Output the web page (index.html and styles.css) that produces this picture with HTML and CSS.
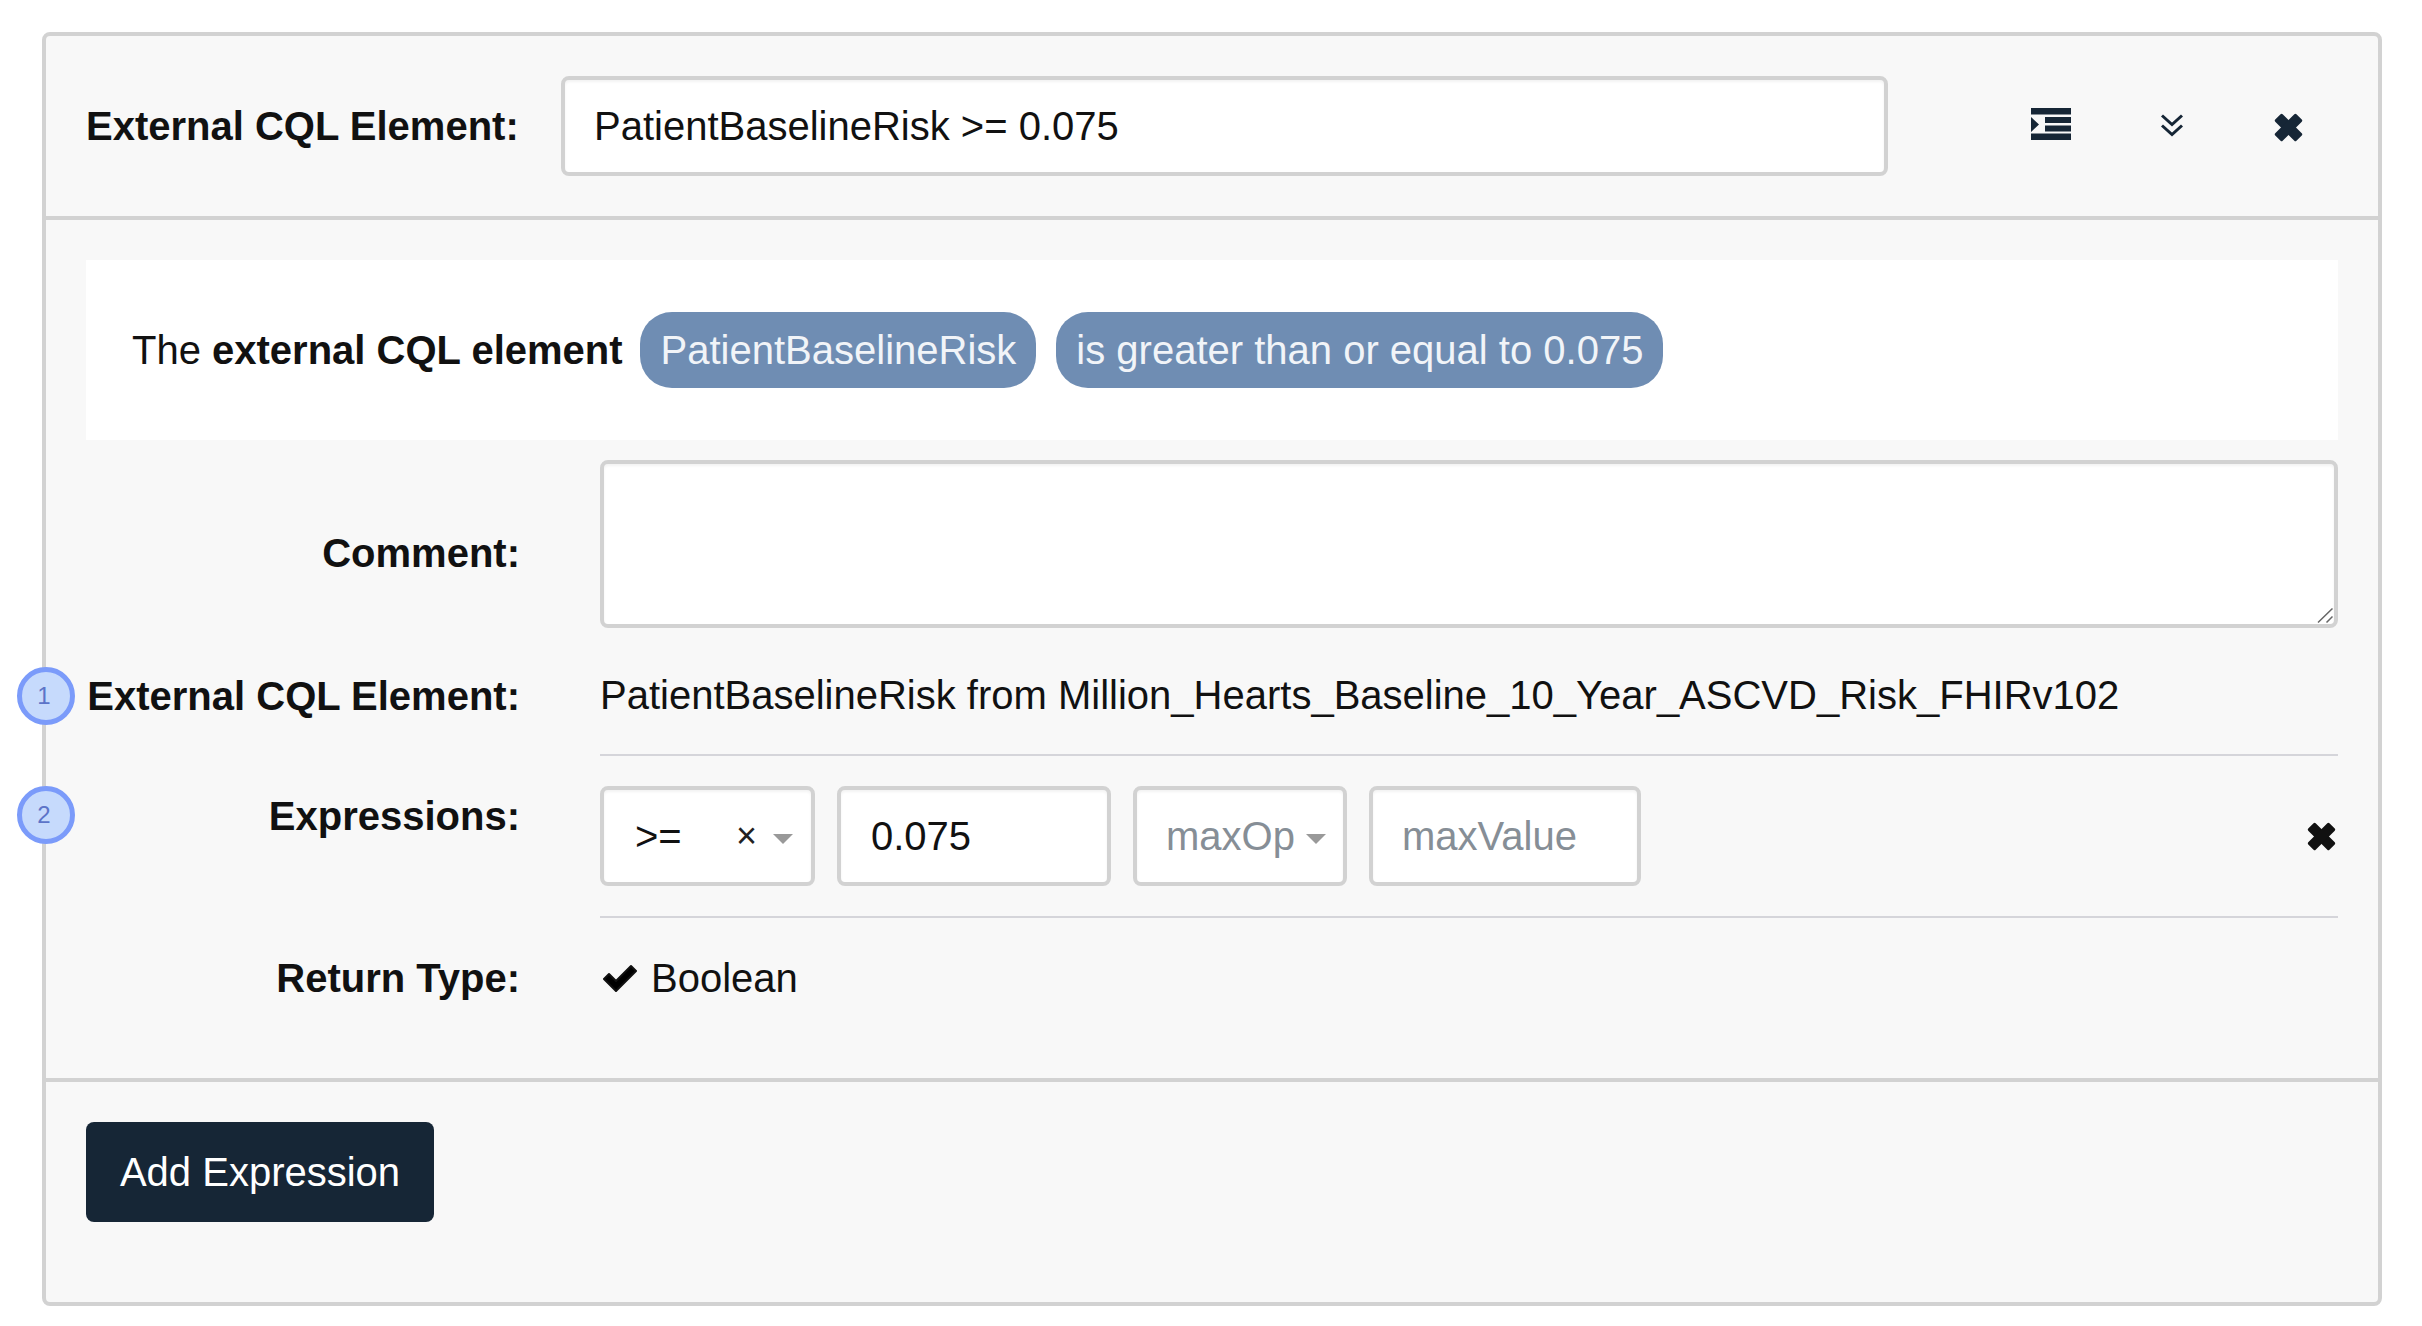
FILE: index.html
```html
<!DOCTYPE html>
<html lang="en">
<head>
<meta charset="utf-8">
<title>External CQL Element</title>
<link rel="stylesheet" href="styles.css">
</head>
<body>
<div class="card">
  <header class="card-header">
    <label class="header-label">External CQL Element:</label>
    <input class="control header-input" type="text" value="PatientBaselineRisk &gt;= 0.075">
    <div class="actions">
      <svg class="icon icon-indent" viewBox="0 0 40 32" width="40" height="32"><path d="M0 0h40v6.500H0zM14 9h26v6H14zM14 17.500h26v6H14zM0 25.500h40V32H0zM0 9l8 7.500L0 24z"/></svg>
      <svg class="icon icon-chevrons" viewBox="0 0 22 22" width="22" height="22"><path d="M1 1.500l10 9 10-9M1 11.500l10 9 10-9" fill="none" stroke="#162636" stroke-width="3"/></svg>
      <svg class="icon icon-close" viewBox="0 0 27 27" width="27" height="27"><g transform="rotate(45 13.500 13.500)"><rect x="-1.500" y="8.250" width="30" height="10.500" rx="1.500"/><rect x="8.250" y="-1.500" width="10.500" height="30" rx="1.500"/></g></svg>
    </div>
  </header>
  <section class="card-body">
    <div class="phrase">
      <span class="phrase-text">The <strong>external CQL element</strong></span>
      <span class="pill">PatientBaselineRisk</span>
      <span class="pill">is greater than or equal to 0.075</span>
    </div>
    <div class="field field-comment">
      <div class="field-label">Comment:</div>
      <div class="comment-wrap">
        <textarea class="control comment"></textarea>
        <svg class="grip" viewBox="0 0 16 15" width="16" height="15"><path d="M1 14.500L15.500 .5M9.500 14.500l6-6" fill="none" stroke="#666" stroke-width="1.500"/></svg>
      </div>
    </div>
    <div class="field field-element">
      <div class="field-label"><span class="step step-one">1</span>External CQL Element:</div>
      <div class="field-value ruled">PatientBaselineRisk from Million_Hearts_Baseline_10_Year_ASCVD_Risk_FHIRv102</div>
    </div>
    <div class="field field-expressions">
      <div class="field-label"><span class="step step-two">2</span>Expressions:</div>
      <div class="expressions ruled">
        <div class="control select select-op"><span class="select-value">&gt;=</span><span class="clear">×</span><span class="caret"></span></div>
        <input class="control value-input" type="text" value="0.075">
        <div class="control select select-max"><span class="placeholder">maxOp</span><span class="caret"></span></div>
        <input class="control value-input value-max" type="text" placeholder="maxValue">
        <svg class="icon icon-remove" viewBox="0 0 27 27" width="27" height="27"><g transform="rotate(45 13.500 13.500)"><rect x="-1.500" y="8.250" width="30" height="10.500" rx="1.500"/><rect x="8.250" y="-1.500" width="10.500" height="30" rx="1.500"/></g></svg>
      </div>
    </div>
    <div class="field field-return">
      <div class="field-label">Return Type:</div>
      <div class="field-value return-value">
        <svg class="icon-check" viewBox="0 0 36 28" width="36" height="28"><path d="M2 15l5-5 7 7L29 2l5 5-20 20z" stroke="#111" stroke-width="2" stroke-linejoin="round"/></svg>
        <span>Boolean</span>
      </div>
    </div>
  </section>
  <footer class="card-footer">
    <button class="add-button" type="button">Add Expression</button>
  </footer>
</div>
</body>
</html>
```
FILE: styles.css
```css
* { box-sizing: border-box; }
html, body { margin: 0; padding: 0; background: #fff; }
body {
  padding: 32px 40px 20px 42px;
  font-family: "Liberation Sans", Arial, Helvetica, sans-serif;
  font-size: 40px;
  line-height: 46px;
  color: #111;
}
.card {
  width: 2340px;
  height: 1274px;
  display: flex;
  flex-direction: column;
  background: #f8f8f8;
  border: 4px solid #d2d2d2;
  border-radius: 8px;
}
.card-header {
  display: flex;
  align-items: center;
  height: 184px;
  padding: 40px;
  border-bottom: 4px solid #d2d2d2;
}
.header-label { width: 475px; flex: none; font-weight: 700; }
.control {
  border: 4px solid #d2d2d2;
  border-radius: 8px;
  background: #fff;
  box-shadow: inset 0 2px 3px rgba(0, 0, 0, .05);
  font: inherit;
  color: #111;
  outline: none;
}
.header-input { width: 1327px; flex: none; height: 100px; padding: 0 29px; }
.actions { display: flex; align-items: center; margin-left: 143px; }
.icon { display: block; fill: #162636; flex: none; overflow: visible; }
.icon-indent { margin-top: -4px; }
.icon-chevrons { margin-left: 90px; margin-top: -2px; }
.icon-close { margin-left: 92px; margin-top: 2px; }
.card-body { flex: 1; padding: 40px 40px 0; border-bottom: 4px solid #d2d2d2; }
.phrase {
  display: flex;
  align-items: center;
  height: 180px;
  padding-left: 46px;
  background: #fff;
  margin-bottom: 20px;
}
.phrase-text { margin-right: 17px; }
.pill {
  display: flex;
  align-items: center;
  height: 76px;
  padding: 0 20px 0 21px;
  margin-right: 20px;
  border-radius: 32px;
  background: #6f8db3;
  color: #f1f4f8;
}
.pill + .pill { padding: 0 20px; }
.field {
  display: grid;
  grid-template-columns: 434px 1fr;
  column-gap: 80px;
}
.field-label { position: relative; text-align: right; font-weight: 700; }
.field-comment { height: 168px; }
.field-comment .field-label { padding-top: 70px; }
.comment-wrap { position: relative; }
.comment { width: 100%; height: 168px; display: block; resize: none; }
.grip { position: absolute; right: 5px; bottom: 5px; }
.ruled { border-bottom: 2px solid #d5d5da; }
.field-element .field-label { padding-top: 45px; }
.field-element .field-value { padding-top: 44px; padding-bottom: 36px; }
.field-expressions .field-label { padding-top: 37px; }
.expressions {
  display: flex;
  align-items: center;
  gap: 22px;
  height: 162px;
  padding: 30px 0;
}
.select {
  display: flex;
  align-items: center;
  height: 100px;
  flex: none;
}
.select-op { width: 215px; padding: 0 18px 0 31px; }
.select-max { width: 214px; padding: 0 17px 0 29px; }
.select-value { flex: 1; }
.clear { font-size: 36px; margin-right: 16px; color: #222; }
.caret {
  width: 0;
  height: 0;
  border-left: 10px solid transparent;
  border-right: 10px solid transparent;
  border-top: 10px solid #999;
  margin-top: 6px;
}
.placeholder { color: #868e96; flex: 1; }
.value-input { width: 274px; height: 100px; padding: 0 30px; flex: none; }
.value-max { width: 272px; padding: 0 29px; }
.value-input::placeholder { color: #868e96; opacity: 1; }
.icon-remove { fill: #111; margin-left: auto; margin-right: 3px; }
.field-return .field-label { padding-top: 37px; }
.return-value { display: flex; align-items: center; height: 46px; margin-top: 37px; }
.icon-check { margin-left: 2px; margin-right: 13px; flex: none; }
.step {
  position: absolute;
  left: -69.500px;
  width: 58px;
  height: 58px;
  display: flex;
  align-items: center;
  justify-content: center;
  padding-right: 3px;
  border: 5px solid #7b9bfa;
  border-radius: 50%;
  background: #c6dafc;
  color: #5c74c8;
  font-size: 24px;
  font-weight: 400;
  line-height: 1;
}
.step-one { top: 39px; }
.step-two { top: 30px; }
.card-footer { height: 220px; padding: 40px; }
.add-button {
  height: 100px;
  width: 348px;
  padding: 0;
  border: 0;
  border-radius: 8px;
  background: #162636;
  color: #fff;
  font: inherit;
}
```
